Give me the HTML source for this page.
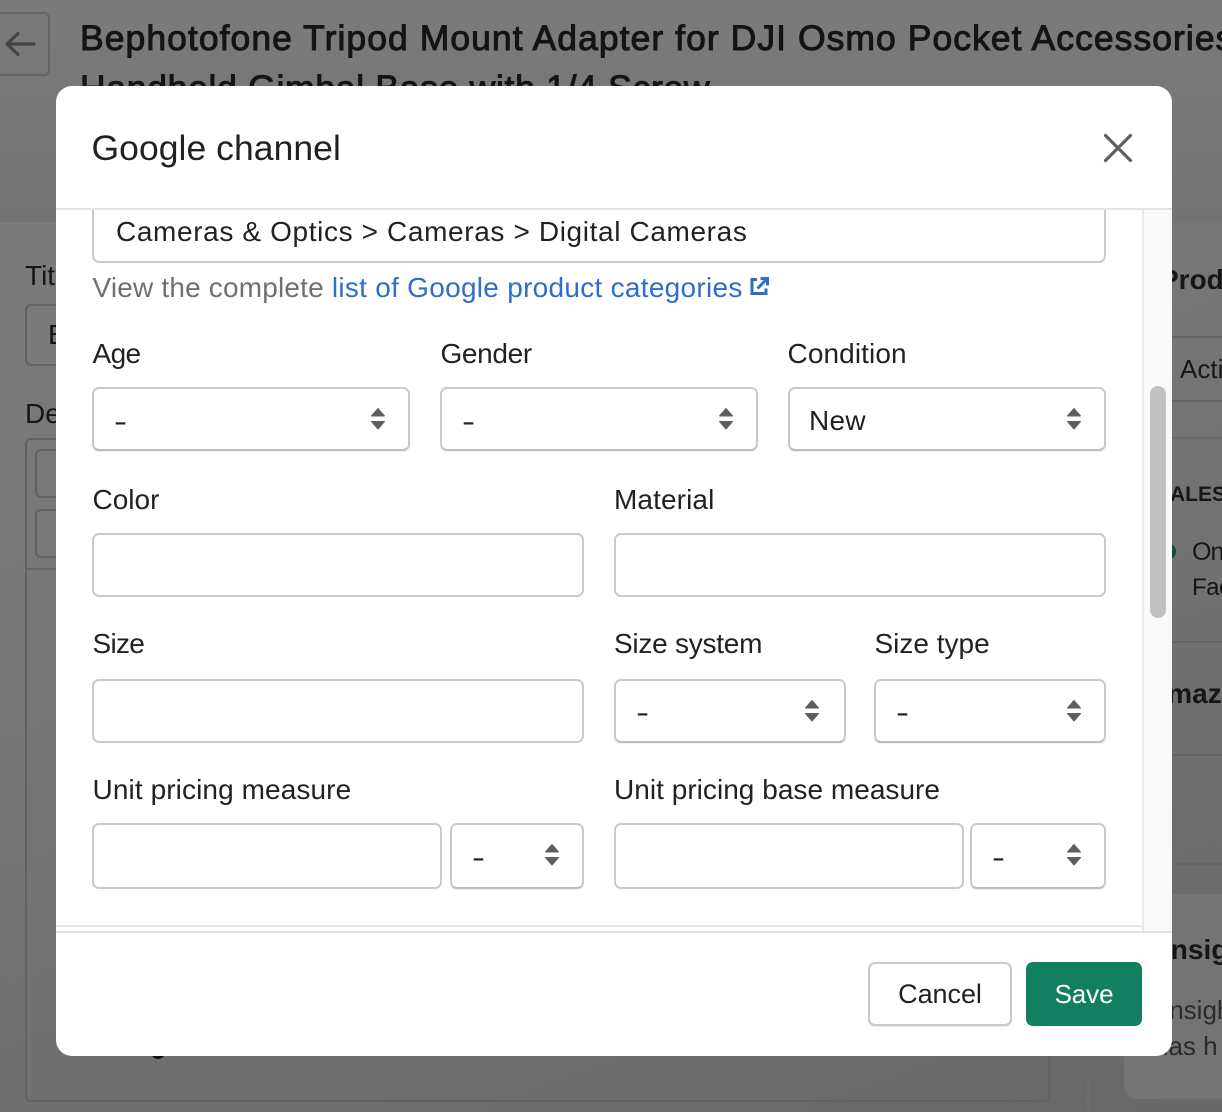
<!DOCTYPE html>
<html lang="en"><head><meta charset="utf-8"><title>Google channel</title>
<style>
*{box-sizing:border-box}
html,body{margin:0;padding:0}
body{width:1222px;height:1112px;position:relative;overflow:hidden;background:linear-gradient(160deg,#7e7e7e 0%,#757575 50%,#686868 100%);font-family:"Liberation Sans",Arial,sans-serif;color:#202223}
.a{position:absolute}
.t{position:absolute;white-space:nowrap;font-size:28px;line-height:36px;color:#1f2122;letter-spacing:0}
.bg{color:#161616}
.bb{position:absolute;border:2px solid #626262;border-radius:6px}
.ln{position:absolute;background:#656565;height:2px}
.title{position:absolute;left:80px;width:1142px;overflow:hidden;white-space:nowrap;font-size:35.5px;line-height:46px;color:#141414;-webkit-text-stroke:1px #141414}
#modal{position:absolute;left:56px;top:86px;width:1116px;height:970px;background:#fff;border-radius:16px;overflow:hidden}
.f{position:absolute;background:#fff;border:2px solid #c6cbd0;border-radius:7px}
.s{position:absolute;background:#fff;border:2px solid #c6cbd0;border-bottom-color:#b9bec3;border-radius:7px;box-shadow:0 1px 1px rgba(30,40,50,.08)}
.s svg{position:absolute;top:18px;width:16px;height:26px}
.s span{position:absolute;top:14px;left:19px;font-size:28px;line-height:36px;color:#1f2122;letter-spacing:.3px}
.s span.d{left:19.500px;top:15px;transform:scaleX(1.4);transform-origin:left center}
</style></head>
<body>
<!-- page behind the overlay -->
<div class="a" style="left:0;top:0;width:1222px;height:222px;background:linear-gradient(180deg,#7b7b7b,#737373)"></div>
<div class="a" style="left:-8px;top:12px;width:58px;height:64px;border:2px solid #636363;border-radius:6px"></div>
<svg class="a" style="left:4px;top:28px" width="32" height="32" viewBox="0 0 32 32"><path d="M30 16H3M14 5.500L3 16l11 10.500" fill="none" stroke="#444" stroke-width="3.200" stroke-linecap="round" stroke-linejoin="round"/></svg>
<div class="title" style="top:15px;letter-spacing:1.05px">Bephotofone Tripod Mount Adapter for DJI Osmo Pocket Accessories</div>
<div class="title" style="top:65px;letter-spacing:.7px">Handheld Gimbal Base with 1/4 Screw</div>
<div class="t bg" style="left:25px;top:258px">Title</div>
<div class="bb" style="left:25px;top:304px;width:1024px;height:62px"></div>
<div class="t bg" style="left:48px;top:317px">B</div>
<div class="t bg" style="left:25px;top:396px">Description</div>
<div class="bb" style="left:25px;top:438px;width:1025px;height:664px"></div>
<div class="bb" style="left:35px;top:449px;width:60px;height:49px"></div>
<div class="bb" style="left:35px;top:509px;width:60px;height:49px"></div>
<div class="ln" style="left:25px;top:568px;width:1024px"></div>
<div class="a" style="left:152px;top:1050px;width:12px;height:9px;border-radius:50%;background:#111"></div>
<div class="a" style="left:1087px;top:222px;width:2px;height:890px;background:#6d6d6d"></div>
<div class="t bg" style="left:1160px;top:262px;font-weight:bold">Prod</div>
<div class="ln" style="left:1172px;top:336px;width:50px"></div>
<div class="t bg" style="left:1180px;top:351px;font-size:26px">Acti</div>
<div class="ln" style="left:1172px;top:400px;width:50px"></div>
<div class="ln" style="left:1172px;top:437px;width:50px;background:#6a6a6a"></div>
<div class="t bg" style="left:1170px;top:477px;font-size:21px;font-weight:bold">ALES</div>
<div class="a" style="left:1163px;top:544px;width:13px;height:15px;border-radius:50%;background:#0b4f3d"></div>
<div class="t bg" style="left:1192px;top:534px;font-size:25px;letter-spacing:-1px">On</div>
<div class="t bg" style="left:1192px;top:570px;font-size:24px;letter-spacing:-.5px">Fac</div>
<div class="ln" style="left:1172px;top:641px;width:50px"></div>
<div class="t bg" style="left:1147px;top:676px;font-weight:bold">Amaz</div>
<div class="ln" style="left:1172px;top:754px;width:50px"></div>
<div class="ln" style="left:1172px;top:863px;width:50px"></div>
<div class="a" style="left:1122px;top:892px;width:120px;height:209px;background:#747474;border:2px solid #6a6a6a;border-radius:16px"></div>
<div class="t bg" style="left:1163px;top:932px;font-weight:bold">Insig</div>
<div class="t" style="left:1162px;top:992px;font-size:26px;color:#2b2b2b">Insigh</div>
<div class="t" style="left:1154px;top:1028px;font-size:26px;color:#2b2b2b">has h</div>

<!-- modal -->
<div id="modal">
  <div class="t" style="left:35.500px;top:39px;font-size:35.500px;line-height:46px;letter-spacing:.05px">Google channel</div>
  <svg class="a" style="left:1044px;top:44px" width="36" height="36" viewBox="0 0 36 36"><path d="M5.500 5.500l25 25M30.500 5.500l-25 25" fill="none" stroke="#5c5f62" stroke-width="3.200" stroke-linecap="round"/></svg>
  <div class="a" style="left:0;top:122px;width:1116px;height:2px;background:#e3e3e3"></div>

  <div class="a" style="left:1086px;top:124px;width:30px;height:722px;background:#fafafa;border-left:2px solid #e8e8e8"></div>
  <div class="a" style="left:1094px;top:300px;width:16px;height:232px;border-radius:8px;background:#c1c1c1"></div>

  <div class="f" style="left:36px;top:124px;width:1014px;height:53px;border-top:none;border-top-left-radius:0;border-top-right-radius:0"></div>
  <div class="t" style="left:60px;top:128px;letter-spacing:.63px">Cameras &amp; Optics &gt; Cameras &gt; Digital Cameras</div>
  <div class="t" style="left:36.500px;top:184px;color:#6d7175;letter-spacing:.18px">View the complete <span style="color:#2c6ecb;letter-spacing:.28px">list of Google product categories</span></div>
  <svg class="a" style="left:693px;top:190px" width="21" height="21" viewBox="0 0 21 21"><path d="M8 3.500H3v14h14v-5" fill="none" stroke="#2c6ecb" stroke-width="3"/><path d="M8.500 12.500L17 4M11.500 2.500h7v7" fill="none" stroke="#2c6ecb" stroke-width="3"/></svg>

  <div class="t" style="left:36.500px;top:250px;letter-spacing:-.6px">Age</div>
  <div class="t" style="left:384.500px;top:250px;letter-spacing:-.35px">Gender</div>
  <div class="t" style="left:731.500px;top:250px;letter-spacing:.1px">Condition</div>
  <div class="s" style="left:36px;top:301px;width:318px;height:64px"><span class="d">-</span><svg style="left:276px" viewBox="0 0 16 26"><path d="M8 1.500l6.500 7.500H1.500zM1.500 14.500h13L8 22z" fill="#5c5f62" stroke="#5c5f62" stroke-linejoin="round"/></svg></div>
  <div class="s" style="left:384px;top:301px;width:318px;height:64px"><span class="d">-</span><svg style="left:276px" viewBox="0 0 16 26"><path d="M8 1.500l6.500 7.500H1.500zM1.500 14.500h13L8 22z" fill="#5c5f62" stroke="#5c5f62" stroke-linejoin="round"/></svg></div>
  <div class="s" style="left:732px;top:301px;width:318px;height:64px"><span>New</span><svg style="left:276px" viewBox="0 0 16 26"><path d="M8 1.500l6.500 7.500H1.500zM1.500 14.500h13L8 22z" fill="#5c5f62" stroke="#5c5f62" stroke-linejoin="round"/></svg></div>

  <div class="t" style="left:36.500px;top:396px">Color</div>
  <div class="t" style="left:558px;top:396px;letter-spacing:.1px">Material</div>
  <div class="f" style="left:36px;top:447px;width:492px;height:64px"></div>
  <div class="f" style="left:558px;top:447px;width:492px;height:64px"></div>

  <div class="t" style="left:36.500px;top:540px;letter-spacing:-.7px">Size</div>
  <div class="t" style="left:558px;top:540px;letter-spacing:-.25px">Size system</div>
  <div class="t" style="left:818.500px;top:540px">Size type</div>
  <div class="f" style="left:36px;top:593px;width:492px;height:64px"></div>
  <div class="s" style="left:558px;top:593px;width:232px;height:64px"><span class="d" style="top:14px">-</span><svg style="left:188px" viewBox="0 0 16 26"><path d="M8 1.500l6.500 7.500H1.500zM1.500 14.500h13L8 22z" fill="#5c5f62" stroke="#5c5f62" stroke-linejoin="round"/></svg></div>
  <div class="s" style="left:818px;top:593px;width:232px;height:64px"><span class="d" style="top:14px">-</span><svg style="left:190px" viewBox="0 0 16 26"><path d="M8 1.500l6.500 7.500H1.500zM1.500 14.500h13L8 22z" fill="#5c5f62" stroke="#5c5f62" stroke-linejoin="round"/></svg></div>

  <div class="t" style="left:36.500px;top:686px;letter-spacing:.1px">Unit pricing measure</div>
  <div class="t" style="left:558px;top:686px;letter-spacing:.03px">Unit pricing base measure</div>
  <div class="f" style="left:36px;top:737px;width:350px;height:66px"></div>
  <div class="s" style="left:394px;top:737px;width:134px;height:66px"><span class="d" style="top:15px">-</span><svg style="left:92px" viewBox="0 0 16 26"><path d="M8 1.500l6.500 7.500H1.500zM1.500 14.500h13L8 22z" fill="#5c5f62" stroke="#5c5f62" stroke-linejoin="round"/></svg></div>
  <div class="f" style="left:558px;top:737px;width:350px;height:66px"></div>
  <div class="s" style="left:914px;top:737px;width:136px;height:66px"><span class="d" style="top:15px">-</span><svg style="left:94px" viewBox="0 0 16 26"><path d="M8 1.500l6.500 7.500H1.500zM1.500 14.500h13L8 22z" fill="#5c5f62" stroke="#5c5f62" stroke-linejoin="round"/></svg></div>

  <div class="a" style="left:0;top:839px;width:1087px;height:2px;background:#e6e6e6"></div>
  <div class="a" style="left:0;top:845px;width:1116px;height:2px;background:#e3e3e3"></div>

  <div class="a" style="left:812px;top:876px;width:144px;height:64px;background:#fff;border:2px solid #c6cbd0;border-radius:7px;box-shadow:0 1px 1px rgba(30,40,50,.1);text-align:center;font-size:27px;line-height:60px;letter-spacing:-.05px;color:#1f2122">Cancel</div>
  <div class="a" style="left:970px;top:876px;width:116px;height:64px;background:#128060;border-radius:7px;text-align:center;font-size:26px;line-height:64px;letter-spacing:-.1px;color:#fff">Save</div>
</div>
</body></html>
